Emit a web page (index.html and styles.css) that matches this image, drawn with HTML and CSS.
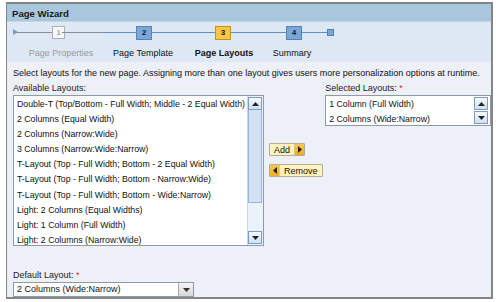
FILE: index.html
```html
<!DOCTYPE html>
<html>
<head>
<meta charset="utf-8">
<link rel="stylesheet" href="styles.css">
</head>
<body>
<div class="wizard">
  <div class="title">Page Wizard</div>
  <div class="steps">
    <div class="track">
      <span class="start"></span>
      <span class="line gray l1"></span>
      <span class="box done b1">1</span>
      <span class="line gray l2"></span>
      <span class="line blue l2b"></span>
      <span class="box blue b2">2</span>
      <span class="line blue l3"></span>
      <span class="box cur b3">3</span>
      <span class="line blue l4"></span>
      <span class="box blue b4">4</span>
      <span class="line blue l5"></span>
      <span class="end"></span>
    </div>
    <div class="labels">
      <span class="lab dim lb1">Page Properties</span>
      <span class="lab lb2">Page Template</span>
      <span class="lab bold lb3">Page Layouts</span>
      <span class="lab lb4">Summary</span>
    </div>
  </div>
  <div class="content">
    <p class="intro">Select layouts for the new page. Assigning more than one layout gives users more personalization options at runtime.</p>
    <div class="cols">
      <div class="avail">
        <div class="lbl">Available Layouts:</div>
        <div class="list big">
          <ul class="items">
            <li>Double-T (Top/Bottom - Full Width; Middle - 2 Equal Width)</li>
            <li>2 Columns (Equal Width)</li>
            <li>2 Columns (Narrow:Wide)</li>
            <li>3 Columns (Narrow:Wide:Narrow)</li>
            <li>T-Layout (Top - Full Width; Bottom - 2 Equal Width)</li>
            <li>T-Layout (Top - Full Width; Bottom - Narrow:Wide)</li>
            <li>T-Layout (Top - Full Width; Bottom - Wide:Narrow)</li>
            <li>Light: 2 Columns (Equal Widths)</li>
            <li>Light: 1 Column (Full Width)</li>
            <li>Light: 2 Columns (Narrow:Wide)</li>
          </ul>
          <div class="sbar">
            <span class="sbtn"><svg width="7" height="4" viewBox="0 0 7 4"><path d="M0 4L3.5 0L7 4Z" fill="#222"/></svg></span>
            <span class="thumb"></span>
            <span class="sbtn bottom"><svg width="7" height="4" viewBox="0 0 7 4"><path d="M0 0L3.5 4L7 0Z" fill="#222"/></svg></span>
          </div>
        </div>
      </div>
      <div class="btns">
        <button class="btn add"><span class="txt">Add</span><span class="arr r"><svg width="4" height="7" viewBox="0 0 4 7"><path d="M0 0L4 3.5L0 7Z" fill="#222"/></svg></span></button>
        <button class="btn rem"><span class="arr l"><svg width="4" height="7" viewBox="0 0 4 7"><path d="M4 0L0 3.5L4 7Z" fill="#222"/></svg></span><span class="txt">Remove</span></button>
      </div>
      <div class="sel">
        <div class="lbl">Selected Layouts: <span class="req">*</span></div>
        <div class="list small">
          <ul class="items">
            <li>1 Column (Full Width)</li>
            <li>2 Columns (Wide:Narrow)</li>
          </ul>
          <div class="sbar2">
            <span class="sbtn"><svg width="7" height="4" viewBox="0 0 7 4"><path d="M0 4L3.5 0L7 4Z" fill="#222"/></svg></span>
            <span class="sbtn"><svg width="7" height="4" viewBox="0 0 7 4"><path d="M0 0L3.5 4L7 0Z" fill="#222"/></svg></span>
          </div>
        </div>
      </div>
    </div>
    <div class="def">
      <div class="lbl">Default Layout: <span class="req">*</span></div>
      <div class="combo">
        <span class="val">2 Columns (Wide:Narrow)</span>
        <span class="dd"><svg width="7" height="4" viewBox="0 0 7 4"><path d="M0 0L3.5 4L7 0Z" fill="#333"/></svg></span>
      </div>
    </div>
  </div>
</div>
</body>
</html>
```
FILE: styles.css
```css
* { box-sizing: border-box; }
html, body { margin: 0; padding: 0; background: #fff; }
body { font-family: "Liberation Sans", Arial, sans-serif; font-size: 9px; color: #111; }
.wizard {
  margin: 2px 3px 0 6px;
  width: 487px;
  height: 297px;
  border: 2px solid #858585;
  border-left-width: 1px;
  display: flex;
  flex-direction: column;
  background: #eef0f8;
}
.title {
  height: 19px;
  background: #a8c6dc;
  border-bottom: 1px solid #c3d6e6;
  font-weight: bold;
  font-size: 9.6px;
  padding: 4px 0 0 5px;
  color: #1a1a1a;
}
.steps {
  height: 40px;
  background: #dde8f4;
  position: relative;
}
.track { position: relative; height: 22px; }
.track > span { position: absolute; }
.start { left: 6px; top: 7px; width: 0; height: 0; border-left: 5px solid #6e9fcf; border-top: 3px solid transparent; border-bottom: 3px solid transparent; }
.line { height: 1px; top: 10px; }
.line.gray { background: #8a8f96; }
.line.blue { background: #5f8fc4; }
.l1 { left: 8px; width: 38px; }
.l2 { left: 55px; width: 42px; }
.l2b { left: 96px; width: 33px; }
.l3 { left: 144px; width: 65px; }
.l4 { left: 224px; width: 56px; }
.l5 { left: 295px; width: 26px; }
.box {
  top: 4px; width: 16px; height: 14px;
  font-size: 7.5px; font-weight: bold; text-align: center; line-height: 12px;
  border: 1px solid #777;
}
.box.done { background: #f7f6f8; border-color: #b0b0b0; color: #aaa; width: 13px; height: 13px; line-height: 11px; }
.box.blue { background: #7aa6d8; border-color: #5582b8; color: #111; }
.box.cur { background: #fac643; border-color: #c8911a; color: #111; }
.b1 { left: 45px; }
.b2 { left: 129px; }
.b3 { left: 208px; }
.b4 { left: 279px; }
.end { left: 320px; top: 7px; width: 7px; height: 7px; background: #7aa6d8; border: 1px solid #4f7fb5; }
.labels { position: relative; height: 18px; }
.lab { position: absolute; top: 4px; white-space: nowrap; transform: translateX(-50%); font-size: 9px; }
.lab.dim { color: #9a9a9a; }
.lab.bold { font-weight: bold; }
.lb1 { left: 54px; }
.lb2 { left: 136px; }
.lb3 { left: 217px; }
.lb4 { left: 285px; }
.content { flex: 1; padding: 6px 0 0 6px; }
.intro { margin: 0; height: 15px; font-size: 9px; white-space: nowrap; }
.cols { display: flex; }
.lbl { height: 12px; font-size: 9px; color: #222; }
.req { color: #d23; }
.list { display: flex; background: #fff; border: 1px solid #8c9aab; }
.list.big { width: 251px; height: 151px; }
.items { list-style: none; margin: 0; padding: 1px 0 0 3px; flex: 1; min-width: 0; overflow: hidden; }
.items li { height: 15.1px; line-height: 14px; font-size: 8.75px; white-space: nowrap; }
.sbar { width: 16px; display: flex; flex-direction: column; background: #eaf2fc; border-left: 1px solid #c9d6e5; padding: 1px 1px 1px 0; }
.sbtn {
  height: 13px; width: 14px; display: flex; align-items: center; justify-content: center;
  background: linear-gradient(#f6f9fd, #cddff2); border: 1px solid #7c9cc2;
}
.thumb { flex: 0 0 93px; margin: 0 1px 0 0; width: 14px; background: #d2e2f4; border: 1px solid #9ab6d6; border-top: none; }
.sbtn.bottom { margin-top: auto; }
.btns { width: 62px; display: flex; flex-direction: column; align-items: flex-start; padding: 60px 0 0 5px; gap: 8px; }
.btn {
  font: inherit; font-size: 9px; color: #111; height: 13px; padding: 0; margin: 0;
  display: flex; align-items: stretch;
  background: #fff3bd; border: 1px solid #b2ad98; border-radius: 1px;
}
.btn .txt { display: flex; align-items: center; padding: 0 4px; }
.btn .arr { display: flex; align-items: center; justify-content: center; width: 10px; background: linear-gradient(#f8c65a, #f0aa2a); }
.btn .arr.r { border-left: 1px solid #e7c879; }
.btn .arr.l { border-right: 1px solid #e7c879; }
.sel { width: 168px; }
.list.small { height: 31px; }
.sbar2 { width: 16px; display: flex; flex-direction: column; justify-content: space-between; padding: 1px 1px 1px 0; }
.sbar2 .sbtn { height: 13px; }
.def { margin-top: 24px; }
.combo { width: 181px; height: 15px; border: 1px solid #8c9aab; background: #fff; display: flex; }
.val { flex: 1; padding-left: 3px; line-height: 13px; }
.dd { width: 15px; display: flex; align-items: center; justify-content: center; background: linear-gradient(#f6f6f6, #d8d8d8); border-left: 1px solid #aaa; }
```
